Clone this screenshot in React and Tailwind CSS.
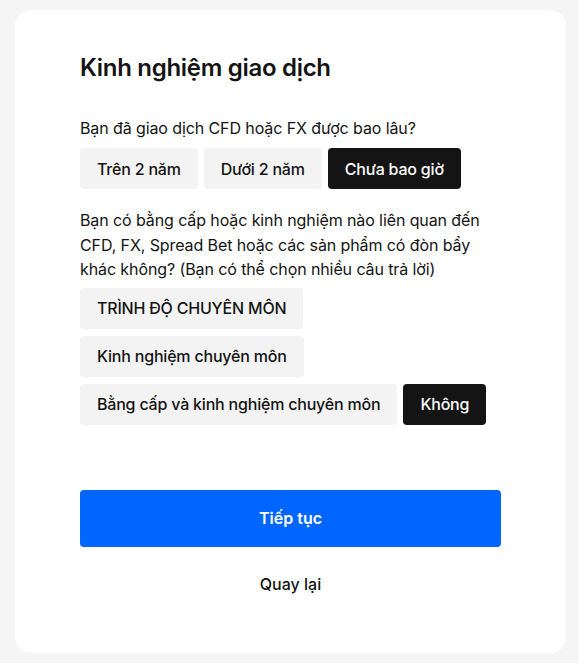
import React from 'react';

const Option = ({ label, active = false }) => (
  <button
    className={`h-[41px] px-[17px] rounded-[4px] text-[16px] font-medium tracking-[-0.2px] whitespace-nowrap ${
      active ? 'bg-[#141414] text-white' : 'bg-[#f3f3f3] text-[#141414]'
    }`}
  >
    {label}
  </button>
);

export default function App() {
  return (
    <div className="w-[578px] h-[663px] bg-[#f5f5f5] pt-[10px] pl-[15px]" style={{ fontFamily: 'Inter, "Noto Sans", sans-serif' }}>
      <div className="w-[551px] h-[643px] bg-white rounded-[16px] px-[65px] pt-[42px]">
        <h1 className="text-[24px] font-semibold text-[#141414] tracking-[-0.3px] leading-[32px]">Kinh nghiệm giao dịch</h1>

        <p className="mt-[32px] text-[16px] text-[#141414] leading-[24px] tracking-[-0.1px]">Bạn đã giao dịch CFD hoặc FX được bao lâu?</p>
        <div className="mt-[8px] flex gap-[6px]">
          <Option label="Trên 2 năm" />
          <Option label="Dưới 2 năm" />
          <Option label="Chưa bao giờ" active />
        </div>

        <p className="mt-[19px] text-[16px] text-[#141414] leading-[24.5px] tracking-[-0.1px]">
          Bạn có bằng cấp hoặc kinh nghiệm nào liên quan đến CFD, FX, Spread Bet hoặc các sản phẩm có đòn bẩy khác không? (Bạn có thể chọn nhiều câu trả lời)
        </p>
        <div className="mt-[6px] flex flex-col gap-[7px] items-start">
          <Option label="TRÌNH ĐỘ CHUYÊN MÔN" />
          <Option label="Kinh nghiệm chuyên môn" />
          <div className="flex gap-[6px]">
            <Option label="Bằng cấp và kinh nghiệm chuyên môn" />
            <Option label="Không" active />
          </div>
        </div>

        <button className="mt-[65px] w-full h-[57px] rounded-[4px] bg-[#0066ff] text-white text-[16px] font-semibold">Tiếp tục</button>
        <div className="mt-[25px] text-center text-[16px] font-medium text-[#141414]">Quay lại</div>
      </div>
    </div>
  );
}
